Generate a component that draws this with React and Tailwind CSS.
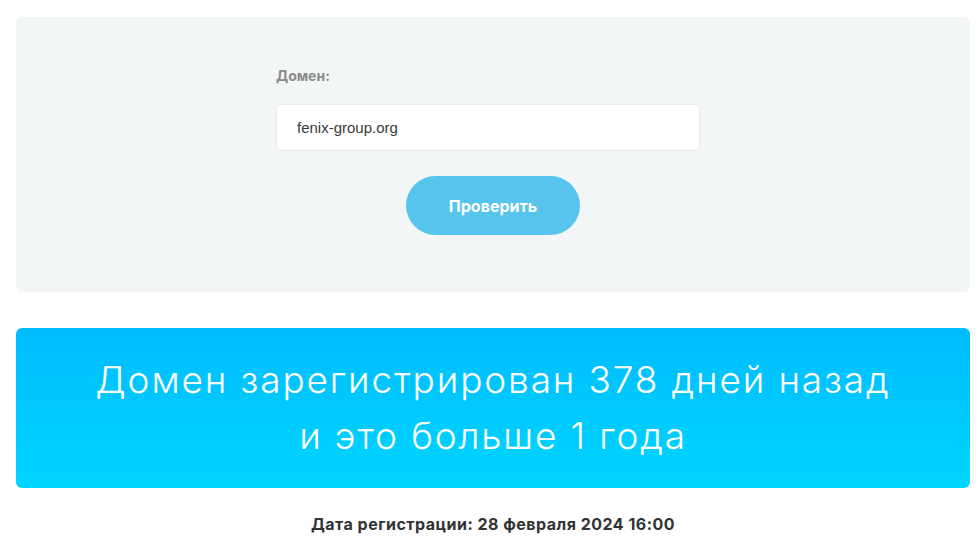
import { useState } from "react";

const App = () => {
  const [domain, setDomain] = useState("fenix-group.org");

  return (
    <div className="min-h-screen bg-white pl-4 pr-2 pt-[17px] font-['Inter',sans-serif]">
      {/* форма проверки */}
      <div className="rounded-md bg-[#f3f6f7] pt-[49px] pb-[57px]">
        <div className="mx-auto w-[424px] -translate-x-[5px]">
          <label className="block text-[14px] font-bold leading-5 text-[#8a8a8a]">
            Домен:
          </label>
          <input
            type="text"
            value={domain}
            onChange={(e) => setDomain(e.target.value)}
            className="mt-[18px] h-[47px] w-full rounded-sm border border-[#e8eced] bg-white px-5 text-[15px] text-[#3a3a3a] outline-none font-['Liberation_Sans',sans-serif]"
          />
          <div className="mt-[25px] flex justify-center pl-[10px]">
            <button className="h-[59px] w-[174px] rounded-full bg-[#56c4ec] text-[16px] font-bold text-white">
              Проверить
            </button>
          </div>
        </div>
      </div>

      {/* результат */}
      <div className="mt-[36px] rounded-md bg-gradient-to-b from-[#00bcff] to-[#00d5ff] py-[24px] text-center">
        <p className="text-[37px] font-light leading-[56px] tracking-[0.05em] text-white">
          Домен зарегистрирован 378 дней назад
          <br />
          и это больше 1 года
        </p>
      </div>

      <p className="mt-[24px] text-center text-[16px] font-bold tracking-[0.03em] text-[#333]">
        Дата регистрации: 28 февраля 2024 16:00
      </p>
    </div>
  );
};

export default App;
